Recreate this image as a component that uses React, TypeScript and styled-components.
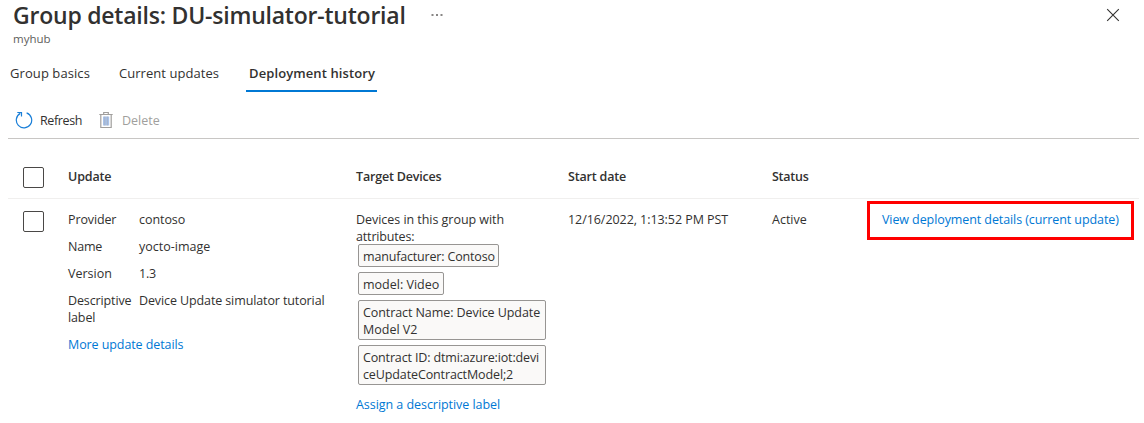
import React from 'react';
import styled, { createGlobalStyle } from 'styled-components';

const Global = createGlobalStyle`
  * { box-sizing: border-box; }
  body {
    margin: 0;
    background: #fff;
    color: #323130;
    font: 400 12.5px/17px "Open Sans", "Noto Sans", sans-serif;
    overflow: hidden;
  }
`;

const Page = styled.main`
  width: 1144px;
  height: 423px;
  background: #fff;
`;

/* Text run with its own tracking, in hundredths of a pixel */
const T = styled.span<{ $t?: number }>`
  letter-spacing: ${(p) => (p.$t ?? 0) / 100}px;
  white-space: nowrap;
`;

const Header = styled.header`
  height: 56px;
  display: flex;
  justify-content: space-between;
  padding: 0 24px 0 13px;
`;
const Heading = styled.div`
  display: flex;
  flex-direction: column;
`;
const TitleRow = styled.div`
  display: flex;
  align-items: center;
  height: 30px;
`;
const Title = styled.h1`
  margin: 0;
  width: 418px;
  font-size: 23px;
  line-height: 30px;
  font-weight: 600;
`;
const Subtitle = styled.div`
  font-size: 11.5px;
  line-height: 18px;
  color: #605e5c;
`;
const PlainButton = styled.button`
  display: flex;
  padding: 0;
  border: 0;
  background: none;
  color: inherit;
`;
const CloseButton = styled(PlainButton)`
  margin-top: 8px;
  height: 14px;
`;

const Tabs = styled.nav`
  display: flex;
  height: 36px;
  padding-left: 8px;
`;
const Tab = styled.div<{ $active?: boolean; $width: number }>`
  width: ${(p) => p.$width}px;
  margin-right: 24px;
  padding: 8px 0 0 ${(p) => (p.$active ? 3 : 2)}px;
  line-height: 18px;
  font-size: 13px;
  font-weight: ${(p) => (p.$active ? 600 : 400)};
  border-bottom: 2px solid ${(p) => (p.$active ? '#0078d4' : 'transparent')};
`;

const Toolbar = styled.div`
  display: flex;
  align-items: center;
  height: 47px;
  margin: 0 5px 0 8px;
  padding: 10px 0 0 7px;
  border-bottom: 1px solid #c8c6c4;
`;
const Command = styled.div<{ $disabled?: boolean; $gap: number; $width: number }>`
  display: flex;
  align-items: center;
  gap: ${(p) => p.$gap}px;
  width: ${(p) => p.$width}px;
  color: ${(p) => (p.$disabled ? '#a19f9d' : 'inherit')};
`;

const Row = styled.div<{ $head?: boolean }>`
  display: grid;
  grid-template-columns: 60px 288px 212px 204px 95px 267px;
  margin: 0 5px 0 8px;
  ${(p) => p.$head && 'height: 60px; font-weight: 600; border-bottom: 1px solid #f0efee;'}
`;
const Cell = styled.div<{ $top: number }>`
  padding-top: ${(p) => p.$top}px;
`;
const Checkbox = styled.div`
  width: 21px;
  height: 21px;
  margin-left: 15px;
  border: 1px solid #4a4846;
  border-radius: 2px;
`;
const Facts = styled.dl`
  display: grid;
  grid-template-columns: 71px 1fr;
  row-gap: 10px;
  margin: 0 0 10px;
  dd { margin: 0; }
`;
const Link = styled.a`
  display: block;
  color: #0078d4;
`;
const Tags = styled.div`
  display: flex;
  flex-direction: column;
  align-items: flex-start;
  gap: 5px;
  margin: -1px 0 11px 2px;
`;
const Tag = styled.div<{ $width: number }>`
  width: ${(p) => p.$width}px;
  padding: 3px 0 1px 4px;
  border: 1px solid #979593;
  border-radius: 2px;
  background: #faf9f8;
`;
const Highlight = styled.div`
  height: 39px;
  margin-top: 2px;
  padding: 7px 0 0 12px;
  border: 3px solid #f00;
`;

const MoreIcon = () => (
  <svg width="12" height="4" viewBox="0 0 12 4" fill="#605e5c">
    <rect x="0.500" y="1" width="2" height="2" opacity=".75" />
    <rect x="5" y="1" width="2" height="2" opacity=".75" />
    <rect x="9.500" y="1" width="2" height="2" opacity=".75" />
  </svg>
);
const CloseIcon = () => (
  <svg width="14" height="14" viewBox="0 0 14 14" fill="none" stroke="#323130" strokeWidth="1.1">
    <path d="M1.2 1.2 12.8 12.8M12.8 1.2 1.2 12.8" />
  </svg>
);
const RefreshIcon = () => (
  <svg width="18" height="18" viewBox="0 0 18 18" fill="none" stroke="#1a7fd8" strokeWidth="1.2">
    <path d="M11.600 1.900A7.700 7.700 0 1 1 5.300 2.400" />
    <path d="M2.300 1.500H6.500V5.600" />
  </svg>
);
const TrashIcon = () => (
  <svg width="14" height="18" viewBox="0 0 14 18" fill="none">
    <rect x="4" y="5.500" width="6.200" height="9" fill="#a9c3ea" />
    <path d="M5.800 5.500v9M8.300 5.500v9" stroke="#a3a6b0" strokeWidth=".6" />
    <path d="M.3 3.500h13.400M4.700 3.500V1.500h4.600V3.500M1.800 3.500v13h10.400v-13" stroke="#a19f9d" strokeWidth="1.2" />
  </svg>
);

export default function App() {
  return (
    <Page>
      <Global />
      <Header>
        <Heading>
          <TitleRow>
            <Title><T $t={-22}>Group details: DU-simulator-tutorial</T></Title>
            <PlainButton aria-label="More"><MoreIcon /></PlainButton>
          </TitleRow>
          <Subtitle><T>myhub</T></Subtitle>
        </Heading>
        <CloseButton aria-label="Close"><CloseIcon /></CloseButton>
      </Header>

      <Tabs>
        <Tab $width={85}><T $t={8}>Group basics</T></Tab>
        <Tab $width={105}><T $t={5}>Current updates</T></Tab>
        <Tab $width={131} $active><T $t={10}>Deployment history</T></Tab>
      </Tabs>

      <Toolbar>
        <Command $gap={7} $width={84}><RefreshIcon /><T $t={-36}>Refresh</T></Command>
        <Command $gap={9} $width={70} $disabled><TrashIcon /><T>Delete</T></Command>
      </Toolbar>

      <Row $head>
        <Cell $top={28}><Checkbox /></Cell>
        <Cell $top={29}><T $t={-15}>Update</T></Cell>
        <Cell $top={29}><T $t={-18}>Target Devices</T></Cell>
        <Cell $top={29}><T $t={-18}>Start date</T></Cell>
        <Cell $top={29}><T $t={-25}>Status</T></Cell>
      </Row>
      <Row>
        <Cell $top={12}><Checkbox /></Cell>
        <Cell $top={12}>
          <Facts>
            <dt><T $t={-12}>Provider</T></dt><dd><T $t={-6}>contoso</T></dd>
            <dt><T $t={-20}>Name</T></dt><dd><T>yocto-image</T></dd>
            <dt><T>Version</T></dt><dd><T $t={-20}>1.3</T></dd>
            <dt><T $t={-12}>Descriptive</T><br /><T $t={-12}>label</T></dt>
            <dd><T $t={-11}>Device Update simulator tutorial</T></dd>
          </Facts>
          <Link><T $t={-9}>More update details</T></Link>
        </Cell>
        <Cell $top={12}>
          <T $t={-4}>Devices in this group with</T><br /><T $t={-16}>attributes:</T>
          <Tags>
            <Tag $width={141}><T $t={-17}>manufacturer: Contoso</T></Tag>
            <Tag $width={86}><T>model: Video</T></Tag>
            <Tag $width={188}><T $t={-8}>Contract Name: Device Update</T><br /><T>Model V2</T></Tag>
            <Tag $width={188}><T $t={-15}>Contract ID: dtmi:azure:iot:devi</T><br /><T $t={-12}>ceUpdateContractModel;2</T></Tag>
          </Tags>
          <Link><T $t={-5}>Assign a descriptive label</T></Link>
        </Cell>
        <Cell $top={12}><T $t={-6}>12/16/2022, 1:13:52 PM PST</T></Cell>
        <Cell $top={12}><T>Active</T></Cell>
        <Highlight><Link><T $t={-9}>View deployment details (current update)</T></Link></Highlight>
      </Row>
    </Page>
  );
}
